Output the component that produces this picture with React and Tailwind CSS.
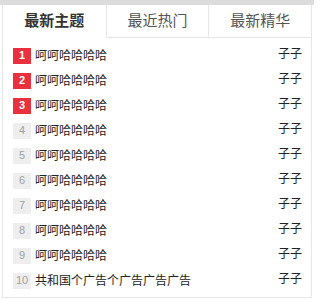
const tabs = ["最新主题", "最近热门", "最新精华"];

const rows = [
  "呵呵哈哈哈哈",
  "呵呵哈哈哈哈",
  "呵呵哈哈哈哈",
  "呵呵哈哈哈哈",
  "呵呵哈哈哈哈",
  "呵呵哈哈哈哈",
  "呵呵哈哈哈哈",
  "呵呵哈哈哈哈",
  "呵呵哈哈哈哈",
  "共和国个广告个广告广告广告",
];

const font = { fontFamily: '"Liberation Sans", "Noto Sans CJK SC", sans-serif' };

export default function App() {
  return (
    <div className="w-[314px] h-[300px] bg-white text-[#333]" style={font}>
      <div className="h-[5px] bg-[#dcdcdc]" />
      <div className="ml-[2px] w-[310px] border-l border-r border-b border-[#e6e6e6]">
        <div className="grid grid-cols-3 h-[33px]">
          {tabs.map((t, i) => (
            <div
              key={t}
              className={
                i === 0
                  ? "flex items-center justify-center text-[15px] font-bold text-[#333]"
                  : "flex items-center justify-center text-[15px] text-[#555] border-l border-b border-[#e6e6e6]"
              }
            >
              {t}
            </div>
          ))}
        </div>
        <ul className="pt-[5px] pb-[4px] pl-[10px] pr-[9px]">
          {rows.map((r, i) => (
            <li key={i} className="flex items-center h-[25px] text-[12px]">
              <span
                className={
                  i < 3
                    ? "w-[18px] h-[16px] flex items-center justify-center bg-[#e8303e] text-white text-[11px] font-bold"
                    : "w-[18px] h-[16px] flex items-center justify-center bg-[#eeeeee] text-[#a0a0a0] text-[11px]"
                }
              >
                {i + 1}
              </span>
              <span className="ml-[4px] flex-1 text-[#222]">{r}</span>
              <span className="pb-[4px] text-[#222]">子子</span>
            </li>
          ))}
        </ul>
      </div>
    </div>
  );
}
